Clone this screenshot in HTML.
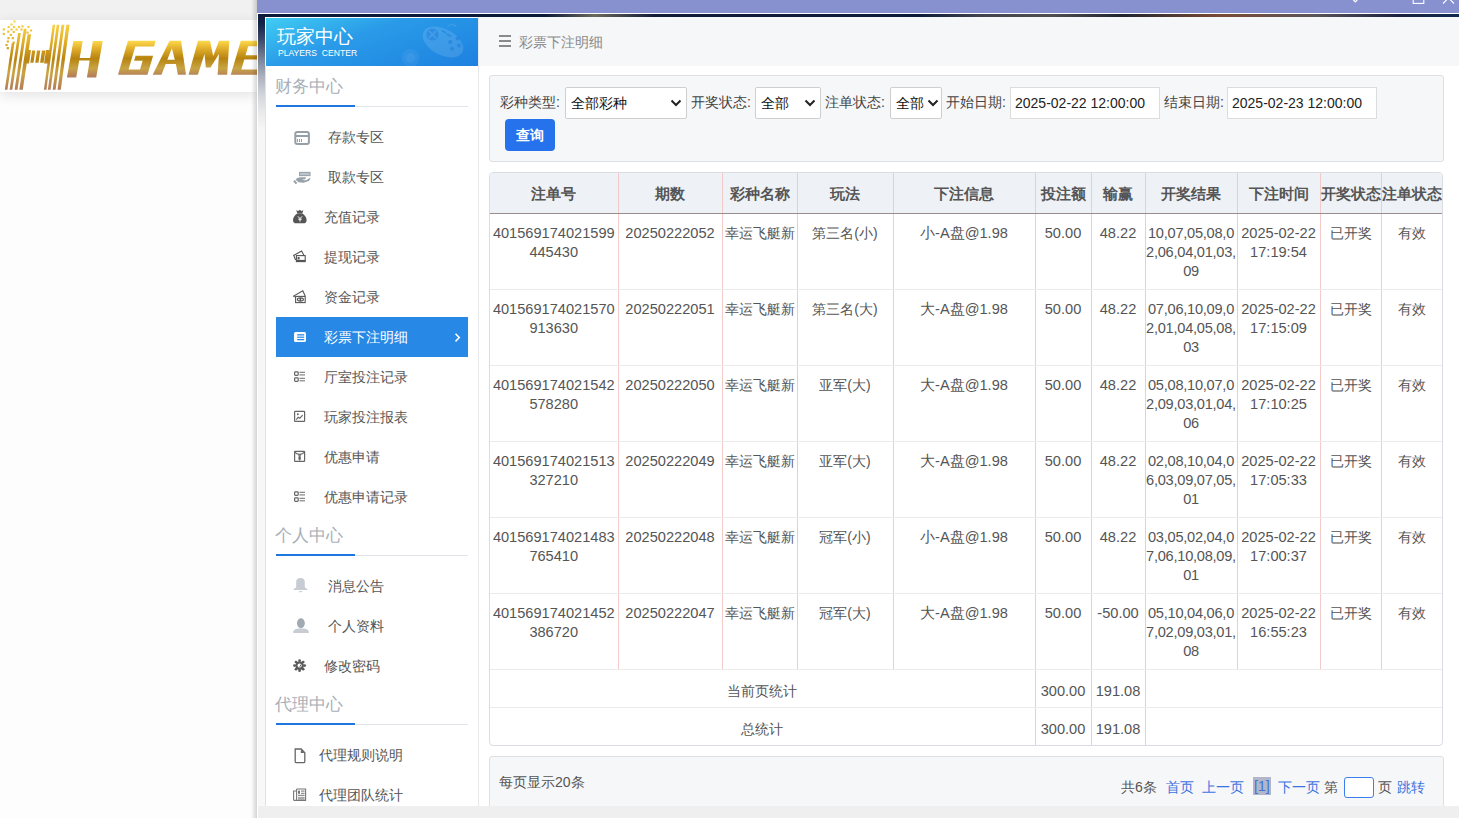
<!DOCTYPE html>
<html><head><meta charset="utf-8">
<style>
*{margin:0;padding:0;box-sizing:border-box}
html,body{width:1459px;height:818px;overflow:hidden;background:#fdfdfd;font-family:"Liberation Sans",sans-serif;color:#555}
.abs{position:absolute}
#topgrey{left:0;top:0;width:257px;height:20px;background:#f1f1f1}
#logoband{left:0;top:20px;width:257px;height:72px;background:#fff;box-shadow:0 3px 12px rgba(0,0,0,.11)}
#win{left:257px;top:0;width:1202px;height:818px}
#title{left:257px;top:0;width:1202px;height:13px;background:#8791d0}
#whiteline{left:257px;top:13px;width:1202px;height:1px;background:#fff}
#frameTop{left:258px;top:14px;width:1201px;height:3px;background:linear-gradient(90deg,#0c1a3a 0%,#0c1a3a 24%,#6b6a5c 28%,#101c38 33%,#0c1a3a 55%,#3f434c 60%,#4f4f50 66%,#1e2530 72%,#7a4a35 80%,#5a5558 88%,#1a2240 95%,#0d2a50 100%)}
#frameLeft{left:258px;top:14px;width:7px;height:792px;background:linear-gradient(180deg,#0c1a3a 0px,#15244a 10px,#3c4868 25px,#7a8298 45px,#aab0bc 62px,#d0d3da 80px,#e8e8ea 96px,#f6f6f6 115px,#f8f8f8 100%)}
#frameLine{left:265px;top:66px;width:1px;height:740px;background:#e2e2e2}
#wleft{left:257px;top:13px;width:1px;height:805px;background:#fff}
#shadowL{left:251px;top:0;width:6px;height:818px;background:linear-gradient(90deg,rgba(0,0,0,0),rgba(0,0,0,.16))}
#bottombar{left:258px;top:806px;width:1201px;height:12px;background:#efefef}
#side{left:266px;top:17px;width:213px;height:789px;background:#fff;border-right:1px solid #e6e8eb}
#phead{left:266px;top:18px;width:212px;height:48px;background:linear-gradient(160deg,#40cdf3 0%,#2a9be8 40%,#238ee4 70%,#1e80e0 100%);color:#fff}
#phead .cn{position:absolute;left:11px;top:7.5px;font-size:19.3px;letter-spacing:0px;line-height:22px}
#phead .en{position:absolute;left:12px;top:29.5px;font-size:8.6px;line-height:10px;white-space:pre}
.sec{position:absolute;left:276px;width:192px;height:2px;font-size:17px;color:#a7afb8}
.sec .t{position:absolute;left:-1px;top:-28px;line-height:20px;white-space:nowrap}
.sec .bl{position:absolute;left:0;top:0;width:79px;height:2px;background:#1f76e0}
.sec .gl{position:absolute;left:79px;top:1px;width:113px;height:1px;background:#e1e4e8}
.mi{position:absolute;left:276px;width:192px;height:40px;font-size:14px;line-height:40px;color:#555;white-space:nowrap}
.mi .ic{position:absolute;left:17px;top:13px;width:16px;height:14px}
.mi .tx{position:absolute;left:48px;top:0}
.mi.wide .tx{left:52px}
.mi.act{background:#2888e6;color:#fff}
.mi.act .arr{position:absolute;right:9px;top:0;font-size:14px}
#chead{left:479px;top:17px;width:980px;height:49px;background:#f6f7f9}
#chead .menu{position:absolute;left:20px;top:18px;width:12px;height:12px}
#chead .menu i{position:absolute;left:0;width:12px;height:2px;background:#8a8a8a}
#chead .tx{position:absolute;left:40px;top:16px;font-size:14px;line-height:18px;color:#888}
#content{left:479px;top:66px;width:980px;height:740px;background:#fff}
.panel{position:absolute;background:#f6f7f9;border:1px solid #dde0e4;border-radius:3px}
#filter{left:489px;top:75px;width:955px;height:87px}
.lbl{position:absolute;font-size:14px;line-height:16px;color:#444;white-space:nowrap}
.sel{position:absolute;top:87px;height:32px;background:#fff;border:1px solid #cfcfcf;border-radius:2px;font-size:14px;color:#111;line-height:30px;padding-left:5px;white-space:nowrap}
.sel svg{position:absolute;right:4px;top:11px}
.inp{position:absolute;top:87px;height:32px;background:#fff;border:1px solid #dcdcdc;font-size:14px;color:#222;line-height:30px;padding-left:4px;white-space:nowrap}
#btn{left:505px;top:119px;width:50px;height:32px;background:#2672ec;border-radius:4px;color:#fff;font-size:14px;font-weight:bold;line-height:32px;text-align:center}
#tbl{left:489px;top:172px;width:954px;height:574px;border:1px solid #d9dde2;border-radius:4px;overflow:hidden;background:#fff}
table{border-collapse:collapse;table-layout:fixed;width:952px}
th{height:40px;background:#eef2f6;font-size:15px;font-weight:bold;color:#555;border-right:1px solid #f2caca;border-bottom:1px solid #9a8c8c;text-align:center;white-space:nowrap;padding:3px 0 0}
td{height:76px;vertical-align:top;text-align:center;font-size:14.6px;line-height:19px;color:#555;border-right:1px solid #f2caca;border-bottom:1px solid #ebebeb;padding:10px 0 0;white-space:nowrap;overflow:hidden}
td.c{font-size:14px}
tr.sum td{height:38px;vertical-align:top;padding:0;padding-top:12px}
tr.sum td.c{font-size:14px}
td.n{letter-spacing:-0.25px}
th:last-child,td:last-child{border-right:1px solid #f2caca}
#pager{left:489px;top:756px;width:955px;height:60px}
.pg{position:absolute;top:778px;font-size:14px;line-height:18px;white-space:nowrap}
.blue{color:#3b73e0}
</style></head><body>
<div id="topgrey" class="abs"></div>
<div id="logoband" class="abs"></div>
<!--LOGO--><svg width="257" height="100" viewBox="0 0 257 100" style="position:absolute;left:0;top:0">
<defs>
<linearGradient id="g1" gradientUnits="userSpaceOnUse" x1="0" y1="22" x2="0" y2="90">
<stop offset="0" stop-color="#fbd64a"/><stop offset="0.28" stop-color="#e2b02a"/><stop offset="0.55" stop-color="#b98511"/><stop offset="0.75" stop-color="#cba445"/><stop offset="1" stop-color="#b27a58"/>
</linearGradient>
<linearGradient id="g2" gradientUnits="userSpaceOnUse" x1="0" y1="41" x2="0" y2="76">
<stop offset="0" stop-color="#fdd84a"/><stop offset="0.25" stop-color="#dca928"/><stop offset="0.5" stop-color="#b78410"/><stop offset="0.78" stop-color="#c8a444"/><stop offset="1" stop-color="#b57f5b"/>
</linearGradient>
</defs>
<path fill="url(#g1)" d="M4.8 89.7 L11.8 43.1 L14.4 43.1 L7.4 89.7 Z M9.6 89.7 L18.1 33.0 L20.8 33.0 L12.3 89.7 Z M14.6 89.7 L23.8 28.7 L26.6 28.7 L17.5 89.7 Z M19.3 89.7 L27.6 34.3 L31.1 34.3 L22.8 89.7 Z M43.9 89.7 L52.7 24.7 L55.2 24.7 L46.4 89.7 Z M47.9 89.7 L56.7 24.7 L59.4 24.7 L50.6 89.7 Z M52.7 89.7 L61.5 24.7 L64.4 24.7 L55.6 89.7 Z M57.5 89.7 L66.3 24.7 L69.6 24.7 L60.8 89.7 Z M25.5 63.5 L27.5 50.0 L31.0 50.0 L29.0 63.5 Z M30.3 62.8 L32.1 50.5 L35.3 50.5 L33.5 62.8 Z M35.2 62.8 L37.0 50.5 L40.3 50.5 L38.5 62.8 Z M40.1 62.8 L41.9 50.5 L45.4 50.5 L43.6 62.8 Z M44.0 63.5 L46.0 50.0 L50.5 50.0 L48.5 63.5 Z M13.4 20.4 L15.6 20.4 L15.6 22.6 L13.4 22.6 Z M10.4 23.4 L12.6 23.4 L12.6 25.6 L10.4 25.6 Z M7.6 25.9 L9.8 25.9 L9.8 28.1 L7.6 28.1 Z M12.9 25.9 L15.1 25.9 L15.1 28.1 L12.9 28.1 Z M17.9 25.9 L20.1 25.9 L20.1 28.1 L17.9 28.1 Z M21.4 25.2 L23.6 25.2 L23.6 27.4 L21.4 27.4 Z M27.4 25.9 L29.6 25.9 L29.6 28.1 L27.4 28.1 Z M2.7 28.2 L4.9 28.2 L4.9 30.4 L2.7 30.4 Z M10.4 28.4 L12.6 28.4 L12.6 30.6 L10.4 30.6 Z M15.4 28.4 L17.6 28.4 L17.6 30.6 L15.4 30.6 Z M20.4 28.4 L22.6 28.4 L22.6 30.6 L20.4 30.6 Z M29.9 29.4 L32.1 29.4 L32.1 31.6 L29.9 31.6 Z M7.2 30.5 L9.4 30.5 L9.4 32.7 L7.2 32.7 Z M12.7 30.9 L14.9 30.9 L14.9 33.1 L12.7 33.1 Z M26.4 31.5 L28.6 31.5 L28.6 33.7 L26.4 33.7 Z M2.7 32.9 L4.9 32.9 L4.9 35.1 L2.7 35.1 Z M9.7 33.7 L11.9 33.7 L11.9 35.9 L9.7 35.9 Z M7.4 37.1 L9.6 37.1 L9.6 39.3 L7.4 39.3 Z M11.7 37.1 L13.9 37.1 L13.9 39.3 L11.7 39.3 Z M6.7 40.4 L8.9 40.4 L8.9 42.6 L6.7 42.6 Z M12.6 41.4 L14.8 41.4 L14.8 43.6 L12.6 43.6 Z M5.4 43.9 L7.6 43.9 L7.6 46.1 L5.4 46.1 Z M6.7 47.1 L8.9 47.1 L8.9 49.3 L6.7 49.3 Z"/>
<path fill="url(#g2)" fill-rule="nonzero" d="M66.9 77.5 L73.4 41.0 L82.7 41.0 L76.2 77.5 Z M86.9 77.5 L92.9 41.0 L102.7 41.0 L96.2 77.5 Z M78.5 60.5 L79.0 58.0 L91.5 58.0 L91.0 60.5 Z M126.4 46.4 L128.0 40.8 L155.7 40.8 L154.1 46.4 Z M118.0 74.7 L128.0 40.8 L137.0 40.8 L127.0 74.7 Z M118.0 74.7 L119.5 69.6 L149.0 69.6 L147.5 74.7 Z M138.5 74.7 L144.1 55.7 L153.1 55.7 L147.5 74.7 Z M134.1 60.8 L135.6 55.7 L153.1 55.7 L151.6 60.8 Z M152.7 74.7 L169.6 40.8 L181.0 40.8 L186.0 74.7 L177.9 74.7 L175.9 64.0 L165.7 64.0 L161.5 74.7 Z M171.9 48.3 L167.3 59.8 L174.8 59.8 Z M188.6 74.7 L198.0 40.8 L210.0 40.8 L213.2 56.0 L219.0 40.8 L229.3 40.8 L227.2 74.7 L217.6 74.7 L219.0 54.0 L210.5 67.5 L205.8 67.5 L204.5 54.0 L197.9 74.7 Z M230.8 74.7 L240.8 40.8 L249.8 40.8 L239.8 74.7 Z M239.2 46.2 L240.8 40.8 L272.0 40.8 L270.4 46.2 Z M235.3 59.5 L236.6 55.2 L267.8 55.2 L266.5 59.5 Z M230.8 74.7 L232.3 69.6 L263.5 69.6 L262.0 74.7 Z"/>
</svg><!--/LOGO-->
<div id="shadowL" class="abs"></div>
<div id="title" class="abs"></div>
<div id="whiteline" class="abs"></div>
<svg width="1459" height="13" viewBox="0 0 1459 13" style="position:absolute;left:0;top:0">
<path d="M1349.5 -4 L1355.3 1.8 L1361 -4" stroke="#fff" stroke-width="1.2" fill="none"/>
<rect x="1413.2" y="-8" width="10.6" height="11.4" stroke="#fff" stroke-width="1.1" fill="none"/>
<path d="M1443 3.5 L1454.5 -8 M1454 3.5 L1442.5 -8" stroke="#fff" stroke-width="1.1" fill="none"/>
</svg>
<div id="wleft" class="abs"></div>
<div id="frameTop" class="abs"></div>
<div id="frameLeft" class="abs"></div>
<div id="frameLine" class="abs"></div>

<div id="side" class="abs"></div>
<div id="phead" class="abs"><svg width="212" height="48" viewBox="266 18 212 48" style="position:absolute;left:0;top:0">
<g transform="rotate(28 443 42)"><ellipse cx="443" cy="42" rx="22" ry="13" fill="#ffffff" fill-opacity="0.12"/></g>
<circle cx="432.4" cy="34.4" r="6" fill="#1f7fe0" fill-opacity="0.55"/>
<path d="M429 31 L436 38 M436 31 L429 38" stroke="#ffffff" stroke-opacity="0.15" stroke-width="1.4"/>
<path d="M442 30.5 L446 33 M447 34 L451 36.5" stroke="#1f7fe0" stroke-opacity="0.6" stroke-width="1.6"/>
<circle cx="457.6" cy="38.6" r="2" fill="#1f7fe0" fill-opacity="0.6"/><circle cx="450.3" cy="42" r="2" fill="#1f7fe0" fill-opacity="0.6"/><circle cx="459" cy="45.5" r="2" fill="#1f7fe0" fill-opacity="0.6"/><circle cx="452.2" cy="48.8" r="2" fill="#1f7fe0" fill-opacity="0.6"/>
<path d="M447.5 26.5 L452 24 L455.5 25.5 L454 27" stroke="#ffffff" stroke-opacity="0.15" stroke-width="0.9" fill="none"/>
<circle cx="410.5" cy="58" r="9" fill="#ffffff" fill-opacity="0.05"/><circle cx="410.5" cy="58" r="5" fill="#ffffff" fill-opacity="0.05"/>
</svg><div class="cn">玩家中心</div><div class="en">PLAYERS  CENTER</div></div>

<div class="sec" style="top:105px"><div class="t">财务中心</div><div class="bl"></div><div class="gl"></div></div>
<div class="mi wide" style="top:117px"><div class="tx">存款专区</div></div>
<div class="mi wide" style="top:157px"><div class="tx">取款专区</div></div>
<div class="mi" style="top:197px"><div class="tx">充值记录</div></div>
<div class="mi" style="top:237px"><div class="tx">提现记录</div></div>
<div class="mi" style="top:277px"><div class="tx">资金记录</div></div>
<div class="mi act" style="top:317px"><div class="tx">彩票下注明细</div><svg style="position:absolute;left:178px;top:16px" width="8" height="10" viewBox="0 0 8 10"><path d="M1.5 0.8 L5.3 4.6 L1.5 8.4" stroke="#fff" stroke-width="1.5" fill="none"/></svg></div>
<div class="mi" style="top:357px"><div class="tx">厅室投注记录</div></div>
<div class="mi" style="top:397px"><div class="tx">玩家投注报表</div></div>
<div class="mi" style="top:437px"><div class="tx">优惠申请</div></div>
<div class="mi" style="top:477px"><div class="tx">优惠申请记录</div></div>
<div class="sec" style="top:554px"><div class="t">个人中心</div><div class="bl"></div><div class="gl"></div></div>
<div class="mi wide" style="top:566px"><div class="tx">消息公告</div></div>
<div class="mi wide" style="top:606px"><div class="tx">个人资料</div></div>
<div class="mi" style="top:646px"><div class="tx">修改密码</div></div>
<div class="sec" style="top:723px"><div class="t">代理中心</div><div class="bl"></div><div class="gl"></div></div>
<div class="mi" style="top:735px"><div class="tx" style="left:43px">代理规则说明</div></div>
<div class="mi" style="top:775px"><div class="tx" style="left:43px">代理团队统计</div></div>

<!--ICONS--><svg width="1459" height="818" viewBox="0 0 1459 818" style="position:absolute;left:0;top:0;pointer-events:none">
<g fill="none" stroke="#959fa8" stroke-width="2">
<rect x="295.3" y="132" width="13.6" height="12" rx="2"/>
<line x1="295.3" y1="136" x2="308.9" y2="136"/>
</g>
<g stroke="#959fa8" stroke-width="1">
<line x1="297.5" y1="139" x2="297.5" y2="142"/><line x1="299.5" y1="139" x2="299.5" y2="142"/><line x1="301.5" y1="139" x2="301.5" y2="142"/>
</g>
<rect x="299.6" y="172.4" width="10.4" height="3.2" fill="#bcc3ca" stroke="#98a2ab" stroke-width="1.1"/>
<path d="M300 177.3 L305.8 177.3 Q306.6 178.6 304.4 179.5 L301.6 179.5 Q304 180.6 306.5 180 L310.5 177.6 Q310.6 179.6 308.8 181 L303.5 182.7 L298.5 182.2 L295.5 179.6 Q297 177.8 300 177.3 Z" fill="#98a2ab"/>
<line x1="294" y1="180.6" x2="296.5" y2="183.6" stroke="#98a2ab" stroke-width="2.2"/>
<path d="M297.6 213.2 Q293 216.2 293 220.2 Q293 223.3 296.2 223.3 L303.4 223.3 Q306.6 223.3 306.6 220.2 Q306.6 216.2 302 213.2 Z M296.2 210.2 L298.2 211 L299.8 209.8 L301.4 211 L303.4 210.2 L302.2 213.4 L297.4 213.4 Z" fill="#555"/>
<path d="M298 216.4 L300 218.6 L302 216.4 M300 218.6 L300 221.6 M298.3 219.2 L301.7 219.2" stroke="#fff" stroke-width="1" fill="none"/>
<g fill="none" stroke="#555" stroke-width="1.1">
<path d="M294 256 L293.6 255.4 L301.6 251 L304 255.4"/>
<path d="M294 256 L295.6 260"/>
<rect x="296.4" y="255.6" width="8.8" height="6"/>
</g>
<rect x="296.4" y="259.9" width="8.8" height="1.8" fill="#555"/>
<rect x="297.6" y="257" width="2" height="2.5" fill="#555"/>
<g fill="none" stroke="#555" stroke-width="1.1">
<path d="M294.6 297 L293.6 296 L302.8 290.8 L305.2 296"/>
<rect x="295.6" y="296.4" width="9.6" height="6.2"/>
<ellipse cx="300.4" cy="299.5" rx="3" ry="1.6"/>
</g>
<rect x="299.6" y="298" width="1.6" height="3" fill="#555"/>
<rect x="294" y="332" width="12" height="10" rx="1.6" fill="#fff"/>
<g fill="#2888e6">
<rect x="297.2" y="334.2" width="7" height="1.3"/><rect x="297.2" y="336.6" width="7" height="1.2"/><rect x="297.2" y="339" width="7" height="1.3"/>
</g>
<g fill="none" stroke="#666" stroke-width="1.2">
<rect x="294.6" y="371.8" width="3.6" height="3.6" rx="0.8"/>
<rect x="294.6" y="377.8" width="3.6" height="3.6" rx="0.8"/>
<rect x="294.6" y="491.8" width="3.6" height="3.6" rx="0.8"/>
<rect x="294.6" y="497.8" width="3.6" height="3.6" rx="0.8"/>
</g>
<g stroke="#777" stroke-width="1.1">
<line x1="299.5" y1="372.3" x2="305" y2="372.3"/><line x1="299.5" y1="374.9" x2="305" y2="374.9"/><line x1="299.5" y1="378.3" x2="305" y2="378.3"/><line x1="299.5" y1="380.8" x2="305" y2="380.8"/>
<line x1="299.5" y1="492.3" x2="305" y2="492.3"/><line x1="299.5" y1="494.9" x2="305" y2="494.9"/><line x1="299.5" y1="498.3" x2="305" y2="498.3"/><line x1="299.5" y1="500.8" x2="305" y2="500.8"/>
</g>
<g fill="none" stroke="#666" stroke-width="1.2">
<rect x="294.6" y="411.4" width="10" height="10" rx="0.6"/>
<polyline points="296.3,419.6 298.2,417.2 299.8,418.3 302.6,415.1"/>
<rect x="294.6" y="451.4" width="10" height="10" rx="0.6"/>
<path d="M294.8 452.2 Q296.5 454.4 299.6 454.4 Q302.7 454.4 304.4 452.2"/>
</g>
<circle cx="297.8" cy="414.3" r="1" fill="#666"/>
<path d="M298.2 455.2 L301 455.2 M299.6 456 L299.6 460.5" stroke="#666" stroke-width="1.3"/>
<ellipse cx="299.6" cy="458" rx="1.3" ry="2" fill="#666"/>
<path d="M296.2 587 L296.2 582 Q296.2 578 300.5 578 Q304.8 578 304.8 582 L304.8 587 L308 590 L293 590 Z" fill="#c8cdd4"/>
<rect x="299.2" y="591" width="2.8" height="1.2" fill="#c8cdd4"/>
<ellipse cx="300.9" cy="623.2" rx="3.9" ry="5" fill="#a0aab3"/>
<path d="M293.2 633 L293.2 631.4 Q294 629.4 298 628.6 L304 628.6 Q308 629.4 308.8 631.4 L308.8 633 Z" fill="#c8cdd4"/>
<g fill="#5a5a5a"><circle cx="299.6" cy="665.6" r="4.3"/><circle cx="304.70" cy="665.60" r="1.35"/><circle cx="303.21" cy="669.21" r="1.35"/><circle cx="299.60" cy="670.70" r="1.35"/><circle cx="295.99" cy="669.21" r="1.35"/><circle cx="294.50" cy="665.60" r="1.35"/><circle cx="295.99" cy="661.99" r="1.35"/><circle cx="299.60" cy="660.50" r="1.35"/><circle cx="303.21" cy="661.99" r="1.35"/></g><circle cx="299.6" cy="665.6" r="2.1" fill="#fff"/><path d="M300.6 664.6 Q301 666.4 299.2 667.2" stroke="#5a5a5a" stroke-width="0.9" fill="none"/>
<path d="M295.2 749 L301.2 749 L304.8 752.8 L304.8 761.4 Q304.8 762.6 303.6 762.6 L296.4 762.6 Q295.2 762.6 295.2 761.4 Z" fill="none" stroke="#666" stroke-width="1.3"/>
<path d="M300.8 749.4 L300.8 752.9 L304.5 752.9 Z" fill="#666"/>
<g fill="none" stroke="#777" stroke-width="1.1">
<path d="M296.6 789 L305.6 789 L305.6 800.4 L294.6 800.4 Q293.6 800.4 293.6 799.4 L293.6 791 L296.6 791"/>
<line x1="296.6" y1="789" x2="296.6" y2="800.4"/>
</g>
<g fill="#777">
<rect x="298" y="790.6" width="2" height="3.2"/><rect x="301" y="790.6" width="3.6" height="1"/><rect x="301" y="792.8" width="3.6" height="1"/><rect x="298" y="794.8" width="6.6" height="1"/><rect x="298" y="796.8" width="6.6" height="3.2" fill="#aaa"/>
</g>
</svg>
<!--/ICONS-->
<div id="content" class="abs"></div>
<div id="chead" class="abs"><div class="menu"><i style="top:0"></i><i style="top:5px"></i><i style="top:10px"></i></div><div class="tx">彩票下注明细</div></div>

<div id="filter" class="panel"></div>
<div class="lbl" style="left:500px;top:94px">彩种类型:</div>
<div class="sel" style="left:565px;width:122px">全部彩种<svg width="12" height="8" viewBox="0 0 12 8"><path d="M1.5 1.5 L6 6 L10.5 1.5" stroke="#222" stroke-width="2" fill="none"/></svg></div>
<div class="lbl" style="left:691px;top:94px">开奖状态:</div>
<div class="sel" style="left:755px;width:66px">全部<svg width="12" height="8" viewBox="0 0 12 8"><path d="M1.5 1.5 L6 6 L10.5 1.5" stroke="#222" stroke-width="2" fill="none"/></svg></div>
<div class="lbl" style="left:825px;top:94px">注单状态:</div>
<div class="sel" style="left:890px;width:52px">全部<svg width="12" height="8" viewBox="0 0 12 8" style="right:2px"><path d="M1.5 1.5 L6 6 L10.5 1.5" stroke="#222" stroke-width="2" fill="none"/></svg></div>
<div class="lbl" style="left:946px;top:94px">开始日期:</div>
<div class="inp" style="left:1010px;width:150px">2025-02-22 12:00:00</div>
<div class="lbl" style="left:1164px;top:94px">结束日期:</div>
<div class="inp" style="left:1227px;width:150px">2025-02-23 12:00:00</div>
<div id="btn" class="abs">查询</div>

<div id="tbl" class="abs">
<table>
<colgroup><col style="width:128px"><col style="width:104px"><col style="width:75px"><col style="width:96px"><col style="width:142px"><col style="width:56px"><col style="width:54px"><col style="width:92px"><col style="width:83px"><col style="width:61px"><col style="width:61px"></colgroup>
<tr><th>注单号</th><th>期数</th><th>彩种名称</th><th>玩法</th><th>下注信息</th><th>投注额</th><th>输赢</th><th>开奖结果</th><th>下注时间</th><th>开奖状态</th><th>注单状态</th></tr>
<tr><td>401569174021599<br>445430</td><td>20250222052</td><td class="c">幸运飞艇新</td><td class="c">第三名(小)</td><td>小-A盘@1.98</td><td>50.00</td><td>48.22</td><td class="n">10,07,05,08,0<br>2,06,04,01,03,<br>09</td><td>2025-02-22<br>17:19:54</td><td class="c">已开奖</td><td class="c">有效</td></tr>
<tr><td>401569174021570<br>913630</td><td>20250222051</td><td class="c">幸运飞艇新</td><td class="c">第三名(大)</td><td>大-A盘@1.98</td><td>50.00</td><td>48.22</td><td class="n">07,06,10,09,0<br>2,01,04,05,08,<br>03</td><td>2025-02-22<br>17:15:09</td><td class="c">已开奖</td><td class="c">有效</td></tr>
<tr><td>401569174021542<br>578280</td><td>20250222050</td><td class="c">幸运飞艇新</td><td class="c">亚军(大)</td><td>大-A盘@1.98</td><td>50.00</td><td>48.22</td><td class="n">05,08,10,07,0<br>2,09,03,01,04,<br>06</td><td>2025-02-22<br>17:10:25</td><td class="c">已开奖</td><td class="c">有效</td></tr>
<tr><td>401569174021513<br>327210</td><td>20250222049</td><td class="c">幸运飞艇新</td><td class="c">亚军(大)</td><td>大-A盘@1.98</td><td>50.00</td><td>48.22</td><td class="n">02,08,10,04,0<br>6,03,09,07,05,<br>01</td><td>2025-02-22<br>17:05:33</td><td class="c">已开奖</td><td class="c">有效</td></tr>
<tr><td>401569174021483<br>765410</td><td>20250222048</td><td class="c">幸运飞艇新</td><td class="c">冠军(小)</td><td>小-A盘@1.98</td><td>50.00</td><td>48.22</td><td class="n">03,05,02,04,0<br>7,06,10,08,09,<br>01</td><td>2025-02-22<br>17:00:37</td><td class="c">已开奖</td><td class="c">有效</td></tr>
<tr><td>401569174021452<br>386720</td><td>20250222047</td><td class="c">幸运飞艇新</td><td class="c">冠军(大)</td><td>大-A盘@1.98</td><td>50.00</td><td>-50.00</td><td class="n">05,10,04,06,0<br>7,02,09,03,01,<br>08</td><td>2025-02-22<br>16:55:23</td><td class="c">已开奖</td><td class="c">有效</td></tr>
<tr class="sum"><td colspan="5" class="c">当前页统计</td><td>300.00</td><td>191.08</td><td colspan="4"></td></tr>
<tr class="sum"><td colspan="5" class="c">总统计</td><td>300.00</td><td>191.08</td><td colspan="4"></td></tr>
</table>
</div>

<div id="pager" class="panel"></div>
<div class="pg" style="left:499px;top:773px">每页显示20条</div>
<div class="pg" style="left:1121px">共6条</div>
<div class="pg blue" style="left:1166px">首页</div>
<div class="pg blue" style="left:1202px">上一页</div>
<div class="pg blue" style="left:1253px;top:777px;background:#b3b5c9;padding:0 1px;height:18px">[1]</div>
<div class="pg blue" style="left:1278px">下一页</div>
<div class="pg" style="left:1324px">第</div>
<div class="abs" style="left:1344px;top:777px;width:30px;height:21px;border:1px solid #3b7ff0;border-radius:3px;background:#fff"></div>
<div class="pg" style="left:1378px">页</div>
<div class="pg blue" style="left:1397px">跳转</div>
<div id="bottombar" class="abs"></div>
</body></html>
